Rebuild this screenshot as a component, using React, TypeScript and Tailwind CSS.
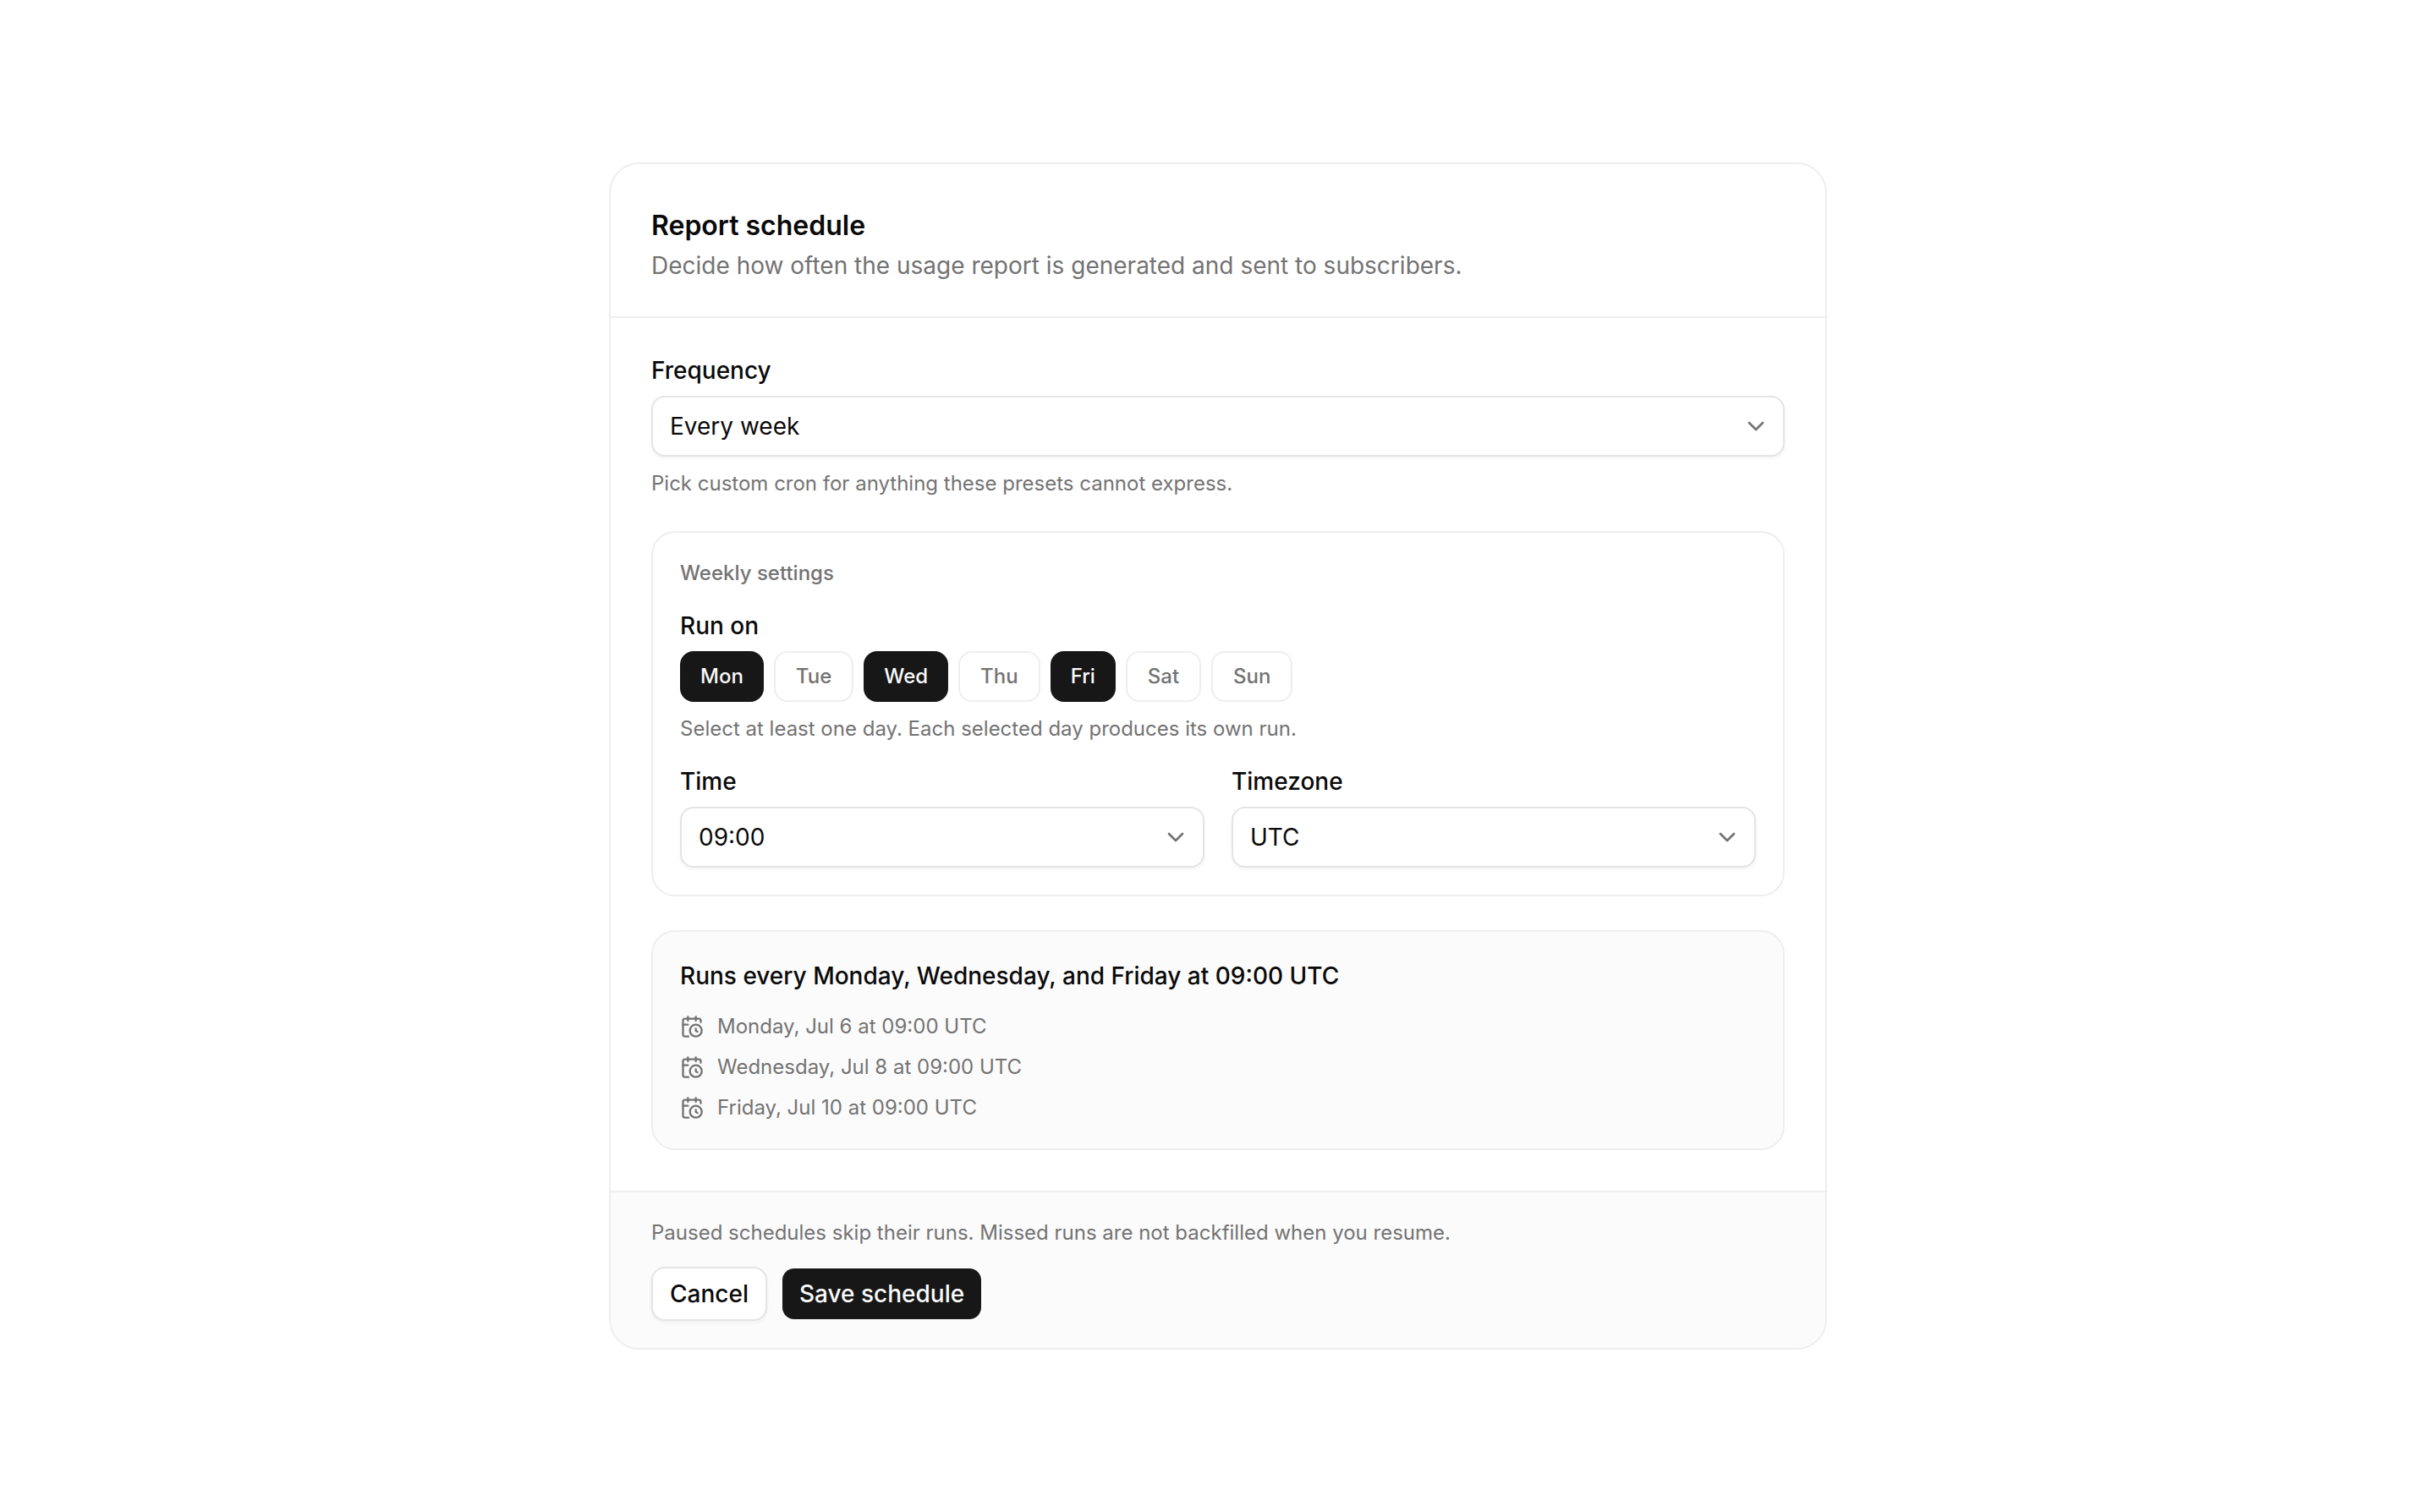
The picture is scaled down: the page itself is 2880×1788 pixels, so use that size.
import { useId, useState } from "react";
import type { ReactNode } from "react";
import clsx from "clsx";
import { CalendarClock, ChevronDown } from "lucide-react";

const DAYS = ["Mon", "Tue", "Wed", "Thu", "Fri", "Sat", "Sun"];

const FREQUENCIES = ["Every day", "Every week", "Every month", "Custom cron"];
const TIMES = ["06:00", "09:00", "12:00", "18:00"];
const TIMEZONES = ["UTC", "Europe/London", "America/New_York", "Asia/Tokyo"];

const NEXT_RUNS = [
  "Monday, Jul 6 at 09:00 UTC",
  "Wednesday, Jul 8 at 09:00 UTC",
  "Friday, Jul 10 at 09:00 UTC",
];

function HelpText({ id, children }: { id?: string; children: ReactNode }) {
  return (
    <p id={id} className="text-[24px] leading-8 text-neutral-500">
      {children}
    </p>
  );
}

function SelectField({
  label,
  options,
  initial,
  help,
}: {
  label: string;
  options: string[];
  initial: string;
  help?: string;
}) {
  const id = useId();
  const [value, setValue] = useState(initial);

  return (
    <div className="flex flex-col gap-4">
      <label htmlFor={id} className="text-[28px] leading-7 font-medium">
        {label}
      </label>
      <div className="relative">
        <select
          id={id}
          value={value}
          onChange={(e) => setValue(e.target.value)}
          aria-describedby={help ? `${id}-help` : undefined}
          className="block h-18 w-full appearance-none rounded-[16px] border-2 border-[#e4e4e4] bg-white pr-16 pl-5 text-[28px] leading-10 shadow-[0_2px_4px_rgba(0,0,0,0.05)]"
        >
          {options.map((option) => (
            <option key={option}>{option}</option>
          ))}
        </select>
        <ChevronDown
          aria-hidden
          className="pointer-events-none absolute inset-y-0 right-4.5 my-auto size-8 text-neutral-500"
        />
      </div>
      {help ? <HelpText id={`${id}-help`}>{help}</HelpText> : null}
    </div>
  );
}

function DayPicker() {
  const [selected, setSelected] = useState(["Mon", "Wed", "Fri"]);

  const toggle = (day: string) =>
    setSelected((days) =>
      days.includes(day) ? days.filter((d) => d !== day) : [...days, day],
    );

  return (
    <div role="group" aria-labelledby="run-on" className="flex flex-col gap-4">
      <span id="run-on" className="text-[28px] leading-7 font-medium">
        Run on
      </span>
      <div className="flex flex-wrap gap-3">
        {DAYS.map((day) => {
          const active = selected.includes(day);
          return (
            <button
              key={day}
              type="button"
              aria-pressed={active}
              onClick={() => toggle(day)}
              className={clsx(
                "h-15 rounded-[16px] px-6 text-[24px] leading-8 font-medium",
                active
                  ? "bg-neutral-900 text-neutral-50"
                  : "border-2 border-[#eeeeee] bg-white text-neutral-500",
              )}
            >
              {day}
            </button>
          );
        })}
      </div>
      <HelpText>
        Select at least one day. Each selected day produces its own run.
      </HelpText>
    </div>
  );
}

export default function App() {
  return (
    <main className="flex min-h-screen items-center justify-center bg-white p-12 font-[Inter,sans-serif] text-neutral-950">
      <form
        onSubmit={(e) => e.preventDefault()}
        className="w-full max-w-[1440px] overflow-hidden rounded-[36px] border-2 border-[#eeeeee] bg-white"
      >
        <header className="flex flex-col gap-0.5 border-b-2 border-[#eeeeee] px-12 pt-12 pb-10">
          <h1 className="text-[32px] leading-[50px] font-semibold">
            Report schedule
          </h1>
          <p className="text-[28px] leading-10 text-neutral-500">
            Decide how often the usage report is generated and sent to
            subscribers.
          </p>
        </header>

        <div className="flex flex-col gap-10 p-12">
          <SelectField
            label="Frequency"
            options={FREQUENCIES}
            initial="Every week"
            help="Pick custom cron for anything these presets cannot express."
          />

          <section className="flex flex-col gap-8 rounded-[28px] border-2 border-[#eeeeee] p-8">
            <h2 className="text-[24px] leading-8 font-medium text-neutral-500">
              Weekly settings
            </h2>
            <DayPicker />
            <div className="grid grid-cols-2 gap-8">
              <SelectField label="Time" options={TIMES} initial="09:00" />
              <SelectField
                label="Timezone"
                options={TIMEZONES}
                initial="UTC"
              />
            </div>
          </section>

          <section className="flex flex-col gap-6 rounded-[28px] border-2 border-[#eeeeee] bg-[#fbfbfb] p-8">
            <h2 className="text-[28px] leading-10 font-medium">
              Runs every Monday, Wednesday, and Friday at 09:00 UTC
            </h2>
            <ul className="flex flex-col gap-4 text-[24px] leading-8 text-neutral-500">
              {NEXT_RUNS.map((run) => (
                <li key={run} className="flex items-center gap-4">
                  <CalendarClock aria-hidden className="size-7 shrink-0" />
                  {run}
                </li>
              ))}
            </ul>
          </section>
        </div>

        <footer className="flex flex-col gap-6 border-t-2 border-[#eeeeee] bg-[#fbfbfb] px-12 py-8">
          <HelpText>
            Paused schedules skip their runs. Missed runs are not backfilled
            when you resume.
          </HelpText>
          <div className="flex items-center gap-4">
            <button
              type="button"
              className="h-16 rounded-[16px] border-2 border-[#e4e4e4] bg-white px-5 text-[28px] leading-10 font-medium shadow-[0_2px_4px_rgba(0,0,0,0.05)]"
            >
              Cancel
            </button>
            <button
              type="submit"
              className="h-16 rounded-[16px] border-2 border-transparent bg-neutral-900 bg-clip-padding px-5 text-[28px] leading-10 font-medium text-neutral-50"
            >
              Save schedule
            </button>
          </div>
        </footer>
      </form>
    </main>
  );
}
